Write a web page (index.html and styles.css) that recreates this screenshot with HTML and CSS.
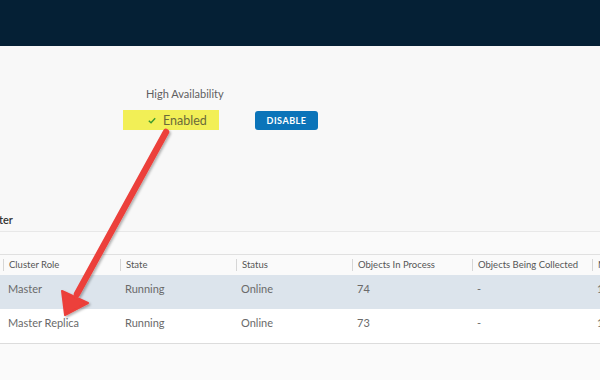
FILE: index.html
```html
<!DOCTYPE html>
<html lang="en">
<head>
    <meta charset="UTF-8">
    <title>Cluster Management</title>
    <link rel="stylesheet" href="styles.css">
</head>
<body>
    <header class="top-bar"></header>

    <main class="content">
        <section class="ha-panel">
            <div class="ha-group">
                <div class="ha-label">High Availability</div>
                <div class="ha-row">
                    <div class="ha-status">
                        <svg class="check" viewBox="0 0 10 8" width="8" height="7"><path d="M1 4.2 L3.8 6.8 L9 1.2" fill="none" stroke="#3c9a2e" stroke-width="1.8"/></svg>
                        <span>Enabled</span>
                    </div>
                    <button class="btn-disable">DISABLE</button>
                </div>
            </div>
        </section>

        <h2 class="section-title">Cluster</h2>

        <div class="toolbar-band"></div>

        <div class="grid">
            <div class="grid-row grid-head">
                <div class="cell lead"></div>
                <div class="cell">Cluster Role</div>
                <div class="cell">State</div>
                <div class="cell">Status</div>
                <div class="cell">Objects In Process</div>
                <div class="cell">Objects Being Collected</div>
                <div class="cell">Metrics</div>
            </div>
            <div class="grid-row selected">
                <div class="cell lead"></div>
                <div class="cell">Master</div>
                <div class="cell">Running</div>
                <div class="cell">Online</div>
                <div class="cell">74</div>
                <div class="cell">-</div>
                <div class="cell">1</div>
            </div>
            <div class="grid-row">
                <div class="cell lead"></div>
                <div class="cell">Master Replica</div>
                <div class="cell">Running</div>
                <div class="cell">Online</div>
                <div class="cell">73</div>
                <div class="cell">-</div>
                <div class="cell">1</div>
            </div>
        </div>
    </main>

    <!-- annotation arrow drawn over the screenshot -->
    <svg class="annotation" width="600" height="380" viewBox="0 0 600 380">
        <defs>
            <filter id="shadow" x="-20%" y="-20%" width="140%" height="140%">
                <feDropShadow dx="1.5" dy="1.5" stdDeviation="1.2" flood-color="#000" flood-opacity="0.3"/>
            </filter>
        </defs>
        <g filter="url(#shadow)" fill="#ec3f3a" stroke="#ec3f3a">
            <line x1="166" y1="132" x2="77" y2="294" stroke-width="6.5" stroke-linecap="round"/>
            <polygon points="62,291 88,303 65,315" stroke-width="2" stroke-linejoin="round"/>
        </g>
    </svg>
</body>
</html>
```

FILE: styles.css
```css
* {
    margin: 0;
    padding: 0;
    box-sizing: border-box;
}

body {
    font-family: Lato, 'Open Sans', sans-serif;
    background: #fafafa;
    width: 600px;
    height: 380px;
    overflow: hidden;
    position: relative;
    color: #565656;
}

.top-bar {
    height: 46px;
    background: #052035;
}

.content {
    background: #f8f8f8;
}

.ha-panel {
    padding: 41px 0 0 123px;
    height: 166px;
}

.ha-label {
    font-size: 11px;
    color: #5f5f5f;
    padding-left: 23px;
    height: 14px;
    line-height: 14px;
    margin-bottom: 9px;
}

.ha-row {
    display: flex;
    align-items: center;
    gap: 36px;
}

.ha-status {
    width: 96px;
    height: 20px;
    background: #f2ef56;
    display: flex;
    align-items: center;
    gap: 7px;
    padding-left: 25px;
    font-size: 12.5px;
    color: #6a6a3a;
}

.check {
    display: block;
}

.btn-disable {
    width: 63px;
    height: 19px;
    background: #0b74b9;
    color: #fff;
    border: none;
    border-radius: 3px;
    font-family: inherit;
    font-size: 9px;
    font-weight: 700;
    letter-spacing: 0.5px;
}

.section-title {
    font-size: 11px;
    font-weight: 600;
    color: #333;
    margin-left: -22px;
    height: 20px;
    line-height: 16px;
    border-bottom: 1px solid #e8e8e8;
}

.toolbar-band {
    height: 23px;
    background: #fafafa;
    border-bottom: 1px solid #e0e0e0;
}

.grid {
    width: 720px;
    background: #fff;
    border-bottom: 1px solid #dcdcdc;
}

.grid-row {
    display: grid;
    grid-template-columns: 3px 117px 116px 116px 120px 120px 128px;
    height: 34px;
    align-items: start;
    padding-top: 7px;
    line-height: 14px;
    font-size: 11px;
    color: #6a6a6a;
}

.grid-head {
    height: 20px;
    padding-top: 4px;
    font-size: 9.5px;
    color: #555;
    background: #fafafa;
}

.grid-head .cell {
    border-left: 1px solid #d6d6d6;
    line-height: 12px;
}

.grid-head .cell.lead {
    border-left: none;
}

.cell {
    padding-left: 5px;
    white-space: nowrap;
}

.cell.lead {
    padding: 0;
}

.selected {
    background: #dce4ec;
}

.annotation {
    position: absolute;
    left: 0;
    top: 0;
    pointer-events: none;
}
```
